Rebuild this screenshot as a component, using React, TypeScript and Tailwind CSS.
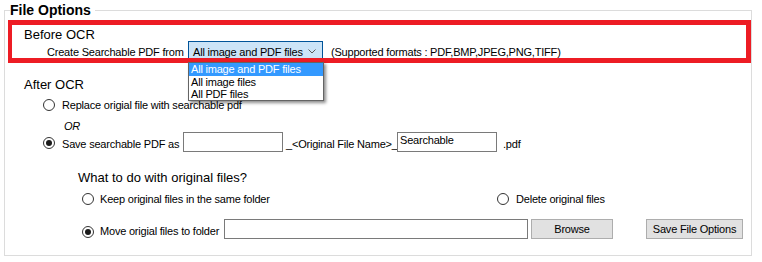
import React from "react";

const font = { fontFamily: '"Liberation Sans", Arial, sans-serif' };

function Radio({ checked }: { checked?: boolean }) {
  return (
    <span className="flex h-[12px] w-[12px] shrink-0 items-center justify-center rounded-full border border-[#333333] bg-white">
      {checked && <span className="h-[6px] w-[6px] rounded-full bg-[#1a1a1a]" />}
    </span>
  );
}

export default function App() {
  return (
    <div
      className="relative h-[262px] w-[762px] overflow-hidden whitespace-nowrap bg-white pl-[4px] pt-[3px] text-black"
      style={font}
    >
      <div className="w-[748px]">
        {/* title row */}
        <div className="flex h-[14px]">
          <div className="mt-[7px] w-[6px] border-l border-t border-[#dcdcdc]" />
          <span className="pr-[4px] text-[14px] font-bold leading-[14px]">File Options</span>
          <div className="mt-[7px] flex-1 border-r border-t border-[#dcdcdc]" />
        </div>

        {/* body */}
        <div className="flex h-[239px] flex-col border-x border-b border-[#dcdcdc] text-[11px] tracking-[-0.2px]">
          <div className="ml-[19px] mt-[10px] h-[14px] text-[13px] leading-[15px] tracking-normal">
            Before OCR
          </div>

          <div className="flex h-[21px] items-center">
            <span className="ml-[42px] w-[141px] shrink-0 pt-[1px] leading-[13px]">Create Searchable PDF from</span>
            <div className="relative shrink-0">
              <div className="flex h-[21px] w-[135px] items-center border border-[#005499] bg-[#cce4f7] pl-[4px] pr-[6px]">
                <span className="flex-1 pt-[1px] leading-[13px]">All image and PDF files</span>
                <svg width="8" height="5" viewBox="0 0 8 5" className="mb-[1px]">
                  <path d="M0.5 0.5 L4 4 L7.5 0.5" fill="none" stroke="#5a5a5a" strokeWidth="1" />
                </svg>
              </div>
              {/* open dropdown list */}
              <div className="absolute left-0 top-[21px] z-10 w-[136px] border border-[#646464] bg-white shadow-[2px_2px_3px_rgba(0,0,0,0.45)]">
                <div className="h-[13px] bg-[#3399ff] pl-[2px] leading-[13px] text-white">All image and PDF files</div>
                <div className="h-[12px] pl-[2px] leading-[13px]">All image files</div>
                <div className="h-[12px] pl-[2px] leading-[13px]">All PDF files</div>
              </div>
            </div>
            <span className="ml-[8px] pt-[1px] leading-[13px]">(Supported formats : PDF,BMP,JPEG,PNG,TIFF)</span>
          </div>

          <div className="ml-[19px] mt-[15px] h-[14px] text-[13px] leading-[15px] tracking-normal">
            After OCR
          </div>

          <div className="ml-[38px] mt-[7px] flex h-[14px] items-center">
            <Radio />
            <span className="ml-[7px] leading-[13px]">Replace origial file with searchable pdf</span>
          </div>

          <div className="ml-[59px] mt-[8px] h-[12px] italic leading-[13px]">OR</div>

          <div className="ml-[38px] flex h-[20px] items-start">
            <span className="mt-[5px] shrink-0">
              <Radio checked />
            </span>
            <span className="ml-[7px] mt-[6px] w-[121px] shrink-0 leading-[13px]">Save searchable PDF as</span>
            <div className="h-[20px] w-[100px] shrink-0 border border-[#7a7a7a] bg-white" />
            <span className="ml-[3px] mt-[6px] w-[111px] shrink-0 leading-[13px]">_&lt;Original File Name&gt;_</span>
            <div className="h-[20px] w-[100px] shrink-0 border border-[#7a7a7a] bg-white pl-[2px] pt-[1px] leading-[13px]">
              Searchable
            </div>
            <span className="ml-[6px] mt-[6px] leading-[13px]">.pdf</span>
          </div>

          <div className="ml-[73px] mt-[18px] h-[15px] text-[13px] leading-[15px] tracking-normal">
            What to do with original files?
          </div>

          <div className="ml-[77px] mt-[7px] flex h-[14px] items-center">
            <div className="flex w-[415px] shrink-0 items-center">
              <Radio />
              <span className="ml-[6px] leading-[13px]">Keep original files in the same folder</span>
            </div>
            <Radio />
            <span className="ml-[7px] leading-[13px]">Delete original files</span>
          </div>

          <div className="ml-[77px] mt-[13px] flex h-[20px] items-start">
            <span className="mt-[7px] shrink-0">
              <Radio checked />
            </span>
            <span className="ml-[6px] mt-[6px] w-[124px] shrink-0 leading-[13px]">Move origial files to folder</span>
            <div className="h-[20px] w-[304px] shrink-0 border border-[#7a7a7a] bg-white" />
            <button className="ml-[3px] flex h-[20px] w-[82px] shrink-0 items-center justify-center border border-[#adadad] bg-[#e1e1e1] leading-[13px]">
              Browse
            </button>
            <button className="ml-[33px] flex h-[20px] w-[97px] shrink-0 items-center justify-center border border-[#adadad] bg-[#e1e1e1] leading-[13px]">
              Save File Options
            </button>
          </div>
        </div>
      </div>

      {/* red annotation rectangle */}
      <div className="pointer-events-none absolute left-[8px] top-[20px] h-[43px] w-[743px] border-[5px] border-l-[4px] border-[#ed1c24]" />
    </div>
  );
}
